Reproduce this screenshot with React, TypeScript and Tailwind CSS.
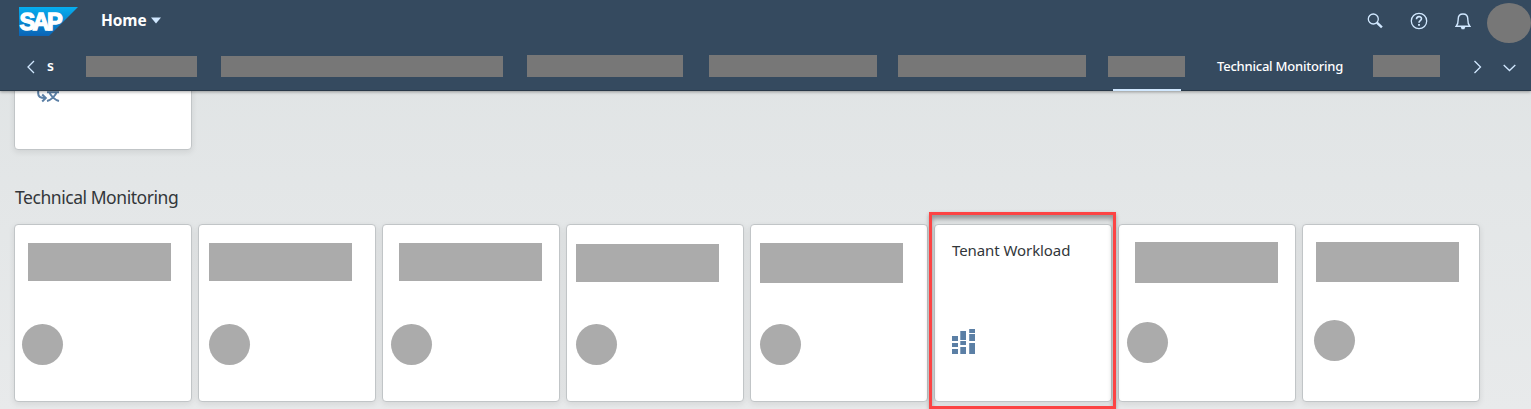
import React from "react";

const tiles = [
  { rect: "ml-[13px] mt-[18px] h-[38px]", dot: "ml-[7px] top-[99px]" },
  { rect: "ml-[10px] mt-[18px] h-[38px]", dot: "ml-[10px] top-[99px]" },
  { rect: "ml-[16px] mt-[18px] h-[38px]", dot: "ml-[8px] top-[99px]" },
  { rect: "ml-[9px] mt-[19px] h-[38px]", dot: "ml-[9px] top-[99px]" },
  { rect: "ml-[9px] mt-[18px] h-[40px]", dot: "ml-[9px] top-[99px]" },
  null,
  { rect: "ml-[16px] mt-[17px] h-[41px]", dot: "ml-[8px] top-[97px]" },
  { rect: "ml-[13px] mt-[17px] h-[40px]", dot: "ml-[11px] top-[95px]" },
];

const navBlocks = [
  "ml-[32px] mt-[56px] w-[111px] h-[21px]",
  "ml-[24px] mt-[56px] w-[282px] h-[21px]",
  "ml-[24px] mt-[55px] w-[156px] h-[22px]",
  "ml-[26px] mt-[55px] w-[168px] h-[22px]",
  "ml-[21px] mt-[55px] w-[188px] h-[22px]",
];

function Logo() {
  return (
    <svg className="ml-[19px] mt-[7px] h-[29px] w-[59px] shrink-0" viewBox="0 0 59 29">
      <defs>
        <linearGradient id="sap" x1="0" y1="0" x2="0" y2="1">
          <stop offset="0" stopColor="#06aeef" />
          <stop offset="1" stopColor="#0a63b5" />
        </linearGradient>
      </defs>
      <path d="M0 0H59L30 29H0Z" fill="url(#sap)" />
      <text x="0.6" y="23" textLength="43" fill="#fff" stroke="#fff" strokeWidth="1.3" fontFamily="Liberation Sans, sans-serif" fontWeight="700" fontSize="23.5">SAP</text>
    </svg>
  );
}

function Workload() {
  return (
    <svg className="ml-[17px] mt-[68px] h-[25px] w-[23px]" viewBox="0 0 23 25" fill="#5b7fa5">
      <path d="M0 7H6V12H0ZM0 14H6V18H0ZM0 20H6V25H0ZM8.3 2H14V11H8.3ZM8.3 12H14V16H8.3ZM8.3 18H14V25H8.3ZM17.2 0H23V4H17.2ZM17.2 5H23V12H17.2ZM17.2 14H23V25H17.2Z" />
    </svg>
  );
}

const card = "h-[178px] w-[178px] shrink-0 rounded-[4px] border border-[#c1c5c7] bg-white shadow-[0_2px_6px_rgba(0,0,0,0.09)]";

export default function App() {
  return (
    <div className="flex h-[409px] w-[1531px] flex-col overflow-hidden bg-linear-to-b from-[#dfe3e4] to-[#e8eaeb] font-['Noto_Sans',sans-serif]">
      <header className="relative z-10 h-[91px] shrink-0 border-b border-[#283848] bg-[#354a5f] shadow-[0_1px_3px_rgba(0,0,0,0.35)]">
        <div className="flex h-[45px] items-start">
          <Logo />
          <div className="ml-[23px] mt-[9px] flex items-center">
            <span className="w-[45px] whitespace-nowrap font-['Open_Sans','Noto_Sans',sans-serif] text-[15.5px] leading-[23px] font-bold tracking-[-0.1px] text-white">Home</span>
            <svg className="ml-[5px] h-[7px] w-[10px]" viewBox="0 0 10 7"><path d="M0 .5H10L5 6.5Z" fill="#d1e8ff" /></svg>
          </div>
          <svg className="mt-[13px] ml-auto h-[16px] w-[16px]" viewBox="0 0 16 16" fill="none" stroke="#d1e8ff">
            <circle cx="6.3" cy="6" r="5" strokeWidth="1.3" /><path d="M9.9 9.6L14.9 14.4" strokeWidth="2.4" />
          </svg>
          <svg className="mt-[12px] ml-[27px] h-[18px] w-[18px]" viewBox="0 0 18 18" fill="none" stroke="#d1e8ff" strokeWidth="1.3">
            <circle cx="9" cy="9" r="7.7" /><path d="M6.5 7.2C6.5 3.7 11.6 3.9 11.5 6.8C11.5 8.7 9 8.6 9 10.7" strokeWidth="1.6" /><path d="M9 12V13.8" strokeWidth="1.9" />
          </svg>
          <svg className="mt-[13px] ml-[27px] h-[17px] w-[16px]" viewBox="0 0 16 17" fill="none" stroke="#d1e8ff" strokeWidth="1.4">
            <path d="M1.2 13.3C3.3 11 3.2 9.3 3.2 6C3.2 2.8 5 1 8 1S12.8 2.8 12.8 6C12.8 9.3 12.7 11 14.8 13.3Z" /><path d="M5.7 14H10.3L9.3 16.2H6.7Z" fill="#d1e8ff" stroke="none" />
          </svg>
          <div className="ml-[16px] mt-[3px] h-[40px] w-[44px] shrink-0 rounded-[50%] bg-[#777]" />
        </div>
        <nav className="-mt-[45px] flex h-[91px] items-start">
          <svg className="mt-[60px] ml-[26px] h-[14px] w-[9px] shrink-0" viewBox="0 0 9 14" fill="none" stroke="#d1e8ff" strokeWidth="1.3"><path d="M8 1L2 7L8 13" /></svg>
          <span className="mt-[56px] ml-[12px] w-[7px] text-[14px] leading-[20px] font-semibold text-white">s</span>
          {navBlocks.map((c) => <div key={c} className={`shrink-0 bg-[#777] ${c}`} />)}
          <div className="ml-[22px] mt-[56px] flex h-[35px] w-[77px] shrink-0 flex-col items-center justify-between">
            <div className="h-[21px] w-[77px] bg-[#777]" />
            <div className="mr-[-1px] h-[2px] w-[68px] bg-[#d1e8ff]" />
          </div>
          <span className="mt-[56px] ml-[32px] w-[127px] shrink-0 whitespace-nowrap text-[13px] leading-[20px] font-medium tracking-[-0.22px] text-white">Technical Monitoring</span>
          <div className="mt-[55px] ml-[29px] h-[22px] w-[67px] shrink-0 bg-[#777]" />
          <svg className="mt-[60px] ml-[33px] h-[14px] w-[9px] shrink-0" viewBox="0 0 9 14" fill="none" stroke="#d1e8ff" strokeWidth="1.3"><path d="M1.5 1L7.5 7L1.5 13" /></svg>
          <svg className="mt-[64px] ml-[21px] h-[8px] w-[13px] shrink-0" viewBox="0 0 13 8" fill="none" stroke="#d1e8ff" strokeWidth="1.3"><path d="M.7 1L6.5 6.5L12.3 1" /></svg>
        </nav>
      </header>
      <main className="pl-[14px]">
        <div className="-mt-[119px] h-[178px] w-[178px] rounded-[4px] border border-[#c1c5c7] bg-white shadow-[0_2px_6px_rgba(0,0,0,0.09)]">
          <svg className="mt-[112px] ml-[22px] h-[18px] w-[24px]" viewBox="0 0 24 18" fill="none" stroke="#5b7fa5" strokeWidth="2">
            <path d="M1.2 6V8.5C1.2 11.8 3.5 13 8 13" /><path d="M5.2 9.5L8.8 13L5.2 16.5" /><path d="M10 7.2H22M12.3 7C13.5 11 18 15 22 16M19.7 7C18.5 11 14 15 10 16" />
          </svg>
        </div>
        <h2 className="mt-[34px] h-[26px] w-[164px] whitespace-nowrap pl-px text-[17.5px] leading-[26px] font-normal tracking-[-0.45px] text-[#32363a]">Technical Monitoring</h2>
        <section className="mt-[14px] flex gap-[6px]">
          {tiles.map((t, i) => t ? (
            <article key={i} className={card}>
              <div className="flex h-[99px] items-start"><div className={`w-[143px] shrink-0 bg-[#ababab] ${t.rect}`} /></div>
              <div className={`relative -mt-[99px] h-[41px] w-[41px] rounded-full bg-[#ababab] ${t.dot}`} />
            </article>
          ) : (
            <article key={i} className={`relative ${card}`}>
              <h3 className="mt-[15px] ml-[17px] h-[21px] whitespace-nowrap text-[15px] leading-[21px] font-normal tracking-[-0.08px] text-[#32363a]">Tenant Workload</h3>
              <Workload />
              <div className="absolute top-[-13px] left-[-6px] h-[197px] w-[187px] border-[3px] border-[#fc4444] shadow-[0_2px_4px_rgba(0,0,0,0.3),inset_0_4px_5px_rgba(0,0,0,0.35)]" />
            </article>
          ))}
        </section>
      </main>
    </div>
  );
}
